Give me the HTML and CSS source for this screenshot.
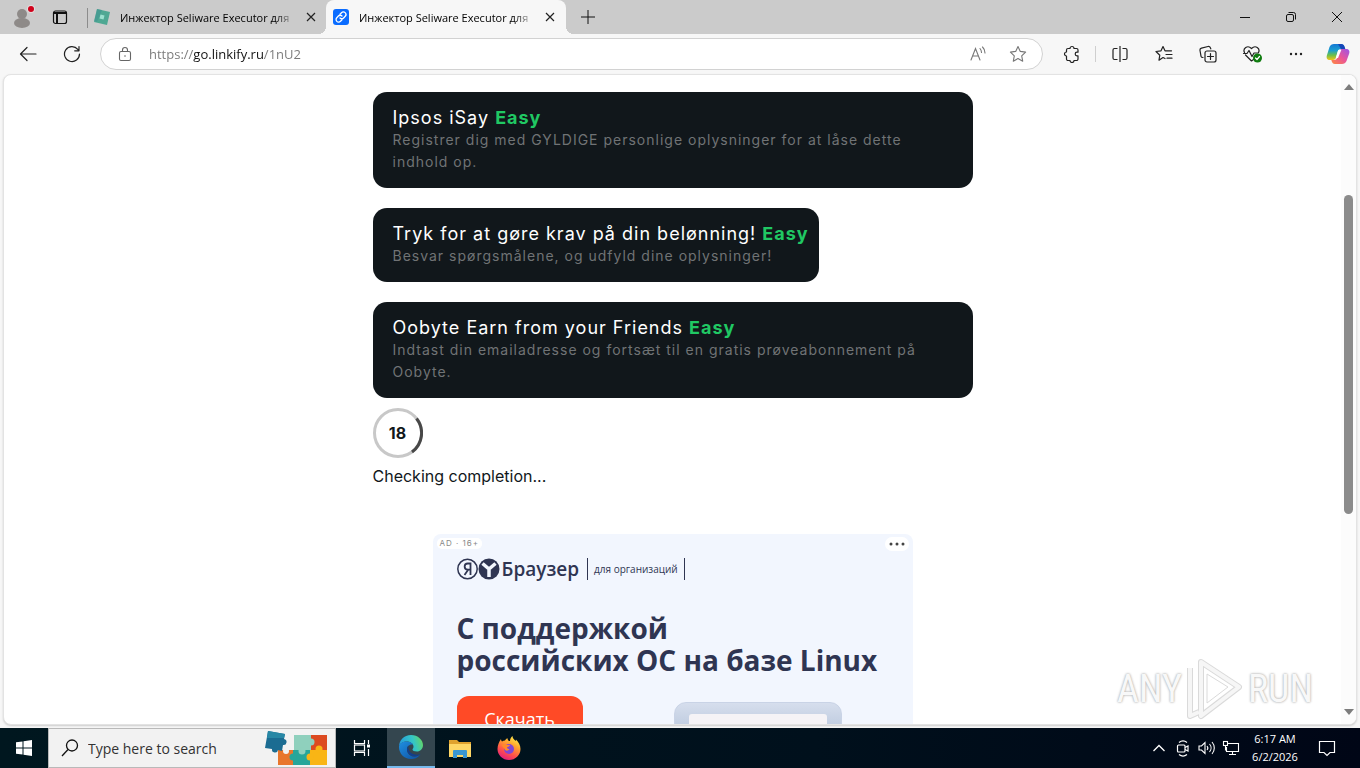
FILE: index.html
```html
<!DOCTYPE html>
<html lang="ru">

<head>
    <meta charset="UTF-8" />
    <meta name="viewport" content="width=device-width, initial-scale=1.0" />
    <title>Инжектор Seliware Executor для</title>
    <link rel="stylesheet" href="styles.css">
</head>

<body>
    <header class="tabbar">
        <button class="profile" aria-label="Profile">
            <svg width="28" height="28" viewBox="0 0 28 28">
                <circle cx="14" cy="11" r="5" fill="#8e8a88" />
                <ellipse cx="14" cy="20" rx="8" ry="5" fill="#8e8a88" />
                <circle cx="23" cy="6" r="4" fill="#e3dcdc" />
                <circle cx="23" cy="6" r="3" fill="#d0021b" />
            </svg>
        </button>
        <button class="tab-actions" aria-label="Tab actions">
            <svg width="16" height="16" viewBox="0 0 16 16" fill="none" stroke="#111" stroke-width="1.2">
                <rect x="1.5" y="2" width="13" height="12.500" rx="2" />
                <path d="M1.500 4h13M5 5v9" stroke-width="2" />
            </svg>
        </button>
        <div class="tab tab-first">
            <svg width="16" height="16" viewBox="0 0 16 16">
                <path d="M3 0l13 3-3 13-13-3z" fill="#4fa893" />
                <path d="M6.500 5.500l4 1-1 4-4-1z" fill="#9be0cf" />
                <path d="M3 0l5 1-5 12-3-1z" fill="#3f8f92" opacity=".5" />
            </svg>
            <span class="tab-title">Инжектор Seliware Executor для</span>
            <button class="tab-close" aria-label="Close tab">
                <svg width="10" height="10" viewBox="0 0 10 10" stroke="#222" stroke-width="1.2"><path d="M1 1l8 8M9 1l-8 8" /></svg>
            </button>
        </div>
        <div class="tab tab-active">
            <svg width="16" height="16" viewBox="0 0 16 16">
                <rect width="16" height="16" rx="3" fill="#0a6cff" />
                <g fill="none" stroke="#fff" stroke-width="1.300" stroke-linecap="round">
                    <path d="M7 5.200l1.500-1.500a2.500 2.500 0 0 1 3.700 3.600L10.600 9a2.500 2.500 0 0 1-3.600 0" />
                    <path d="M9 10.800l-1.500 1.500a2.500 2.500 0 0 1-3.700-3.600L5.400 7A2.500 2.500 0 0 1 9 7" />
                </g>
            </svg>
            <span class="tab-title">Инжектор Seliware Executor для</span>
            <button class="tab-close" aria-label="Close tab">
                <svg width="10" height="10" viewBox="0 0 10 10" stroke="#222" stroke-width="1.2"><path d="M1 1l8 8M9 1l-8 8" /></svg>
            </button>
        </div>
        <button class="new-tab" aria-label="New tab">
            <svg width="14" height="14" viewBox="0 0 14 14" stroke="#111"><path d="M7 0v14M0 7h14" /></svg>
        </button>
        <div class="window-buttons">
            <button aria-label="Minimize"><svg width="10" height="10" viewBox="0 0 10 10" stroke="#111"><path d="M0 5.500h10" /></svg></button>
            <button aria-label="Restore">
                <svg width="10" height="10" viewBox="0 0 10 10" fill="none" stroke="#111"><rect x=".5" y="2.500" width="7" height="7" rx="1.500" /><path d="M2.500 .5h5a2 2 0 0 1 2 2v5" /></svg>
            </button>
            <button aria-label="Close"><svg width="10" height="10" viewBox="0 0 10 10" stroke="#111"><path d="M0 0l10 10M10 0L0 10" /></svg></button>
        </div>
    </header>

    <div class="toolbar">
        <button aria-label="Back">
            <svg width="18" height="16" viewBox="0 0 18 16" fill="none" stroke="#222" stroke-width="1.200" stroke-linecap="round" stroke-linejoin="round"><path d="M17 8H1.500M8 1.500L1.500 8 8 14.500" /></svg>
        </button>
        <button aria-label="Refresh">
            <svg width="18" height="18" viewBox="0 0 18 18" fill="none" stroke="#222" stroke-width="1.200" stroke-linecap="round" stroke-linejoin="round"><path d="M16.500 9A7.500 7.500 0 1 1 14.800 4.300L16 5.800M16 1.500v4.300h-4.300" /></svg>
        </button>
        <form class="address">
            <button type="button" class="lock" aria-label="Site information">
                <svg width="14" height="16" viewBox="0 0 14 16" fill="none" stroke="#666" stroke-width="1.100"><rect x="1.500" y="5.500" width="11" height="9" rx="1.500" /><path d="M4.500 5.500V4a2.500 2.500 0 0 1 5 0v1.500" /><circle cx="7" cy="10" r=".8" fill="#666" stroke="none" /></svg>
            </button>
            <input class="url" type="text" value="https://go.linkify.ru/1nU2" aria-label="Address" spellcheck="false">
            <button type="button" aria-label="Read aloud">
                <svg width="18" height="18" viewBox="0 0 18 18" fill="none" stroke="#777" stroke-width="1.100" stroke-linecap="round"><path d="M2 15L6.500 3.500 11 15M3.500 11h6M11 3.500a6 6 0 0 1 1.500 4M13.500 2a8 8 0 0 1 2.500 6" /></svg>
            </button>
            <button type="button" aria-label="Add to favorites">
                <svg width="18" height="18" viewBox="0 0 18 18" fill="none" stroke="#777" stroke-width="1.100" stroke-linejoin="round"><path d="M9 1.500l2.300 4.900 5.300.7-3.900 3.700 1 5.400L9 13.600l-4.700 2.600 1-5.400L1.400 7.100l5.300-.7z" /></svg>
            </button>
        </form>
        <button aria-label="Extensions">
            <svg width="18" height="18" viewBox="0 0 18 18" fill="none" stroke="#222" stroke-width="1.200" stroke-linejoin="round"><path d="M5 3.500h2a2 2 0 0 1 4 0h2.500A1.500 1.500 0 0 1 15 5v2.200h-1a1.800 1.800 0 0 0 0 3.600h1V14a1.500 1.500 0 0 1-1.500 1.500H11a2 2 0 0 1-4 0H5A1.500 1.500 0 0 1 3.500 14v-3a2 2 0 0 1 0-4V5A1.500 1.500 0 0 1 5 3.500z" /></svg>
        </button>
        <span class="divider"></span>
        <button aria-label="Split screen">
            <svg width="18" height="18" viewBox="0 0 18 18" fill="none" stroke="#222" stroke-width="1.200"><path d="M6.500 3.500h-3A1.500 1.500 0 0 0 2 5v8a1.500 1.500 0 0 0 1.500 1.500h3M11.500 3.500h3A1.500 1.500 0 0 1 16 5v8a1.500 1.500 0 0 1-1.500 1.500h-3M9 1v16" /></svg>
        </button>
        <button aria-label="Favorites">
            <svg width="18" height="18" viewBox="0 0 18 18" fill="none" stroke="#222" stroke-width="1.200" stroke-linecap="round" stroke-linejoin="round"><path d="M10 13.500l-2-1-4 2.700.8-5L1 6.500l5-.7L8 1.500l2 4.300h6.500M11 9.500h6M12 13.200h5" /></svg>
        </button>
        <button aria-label="Collections">
            <svg width="18" height="18" viewBox="0 0 18 18" fill="none" stroke="#222" stroke-width="1.200" stroke-linecap="round"><rect x="6" y="6" width="11" height="11" rx="2" /><path d="M11.500 8.500v6M8.500 11.500h6M4 12.500a2 2 0 0 1-2-1.300L1 5.500a2 2 0 0 1 1.500-2.300L9 1.500A2 2 0 0 1 11.500 3l.3.900" /></svg>
        </button>
        <button aria-label="Browser essentials">
            <svg width="20" height="18" viewBox="0 0 20 18" fill="none" stroke="#222" stroke-width="1.200" stroke-linecap="round" stroke-linejoin="round">
                <path d="M2.500 7.500C.5 3.500 5.500-.5 9.500 3.500c4-4 9 0 7 4M3.500 10l6 6 2-1.500M1.500 8.500H5l2-3 3 6 2-3.500h4" />
                <circle cx="15.500" cy="13" r="4.500" fill="#107c10" stroke="none" />
                <path d="M13.500 13l1.500 1.500 2.500-3" stroke="#fff" />
            </svg>
        </button>
        <button aria-label="Settings and more">
            <svg width="14" height="4" viewBox="0 0 14 4" fill="#222"><circle cx="2" cy="2" r="1.200" /><circle cx="7" cy="2" r="1.200" /><circle cx="12" cy="2" r="1.200" /></svg>
        </button>
        <button class="copilot" aria-label="Copilot">
            <svg width="24" height="24" viewBox="0 0 24 24">
                <defs>
                    <linearGradient id="cp-a" x1="0" y1="0" x2="0" y2="1"><stop offset="0" stop-color="#1477d4" /><stop offset=".4" stop-color="#1b9fd0" /><stop offset=".7" stop-color="#6cc04a" /><stop offset="1" stop-color="#f5c518" /></linearGradient>
                    <linearGradient id="cp-b" x1="1" y1="0" x2="0" y2="1"><stop offset="0" stop-color="#9a54e8" /><stop offset=".5" stop-color="#ea5599" /><stop offset="1" stop-color="#ff8a3d" /></linearGradient>
                </defs>
                <path d="M8 2h7a3 3 0 0 1 3 2l1 3h-4c-2 0-3 1-3.500 3L10 15.500C9.500 17 8.500 18 7 18H4c-3 0-4-2-3-5l2.500-8C4.300 3 6 2 8 2z" fill="url(#cp-a)" />
                <path d="M16 22H9a3 3 0 0 1-3-2l-.7-2H8c2 0 3-1 3.500-3L13.500 9c.5-1.500 1.500-2 3-2H20c3 0 4 2 3 5l-2.500 7c-.8 2-2.500 3-4.500 3z" fill="url(#cp-b)" />
                <path d="M15 2c2 0 3 1 3.500 2.500l.8 2.500H15l-3-5z" fill="#1547b8" />
                <path d="M12.300 8h3L12 16H9.800z" fill="#fff" />
            </svg>
        </button>
    </div>

    <div class="viewport">
        <main class="page">
            <div class="offers">
                <a href="#" class="offer">
                    <span class="offer-title">Ipsos iSay <b>Easy</b></span>
                    <span class="offer-text">Registrer dig med GYLDIGE personlige oplysninger for at låse dette indhold op.</span>
                </a>
                <a href="#" class="offer">
                    <span class="offer-title">Tryk for at gøre krav på din belønning! <b>Easy</b></span>
                    <span class="offer-text">Besvar spørgsmålene, og udfyld dine oplysninger!</span>
                </a>
                <a href="#" class="offer">
                    <span class="offer-title">Oobyte Earn from your Friends <b>Easy</b></span>
                    <span class="offer-text">Indtast din emailadresse og fortsæt til en gratis prøveabonnement på Oobyte.</span>
                </a>
                <div class="timer">
                    <svg viewBox="0 0 50 50" fill="none" stroke-width="3">
                        <circle cx="25" cy="25" r="23.500" stroke="#c8c8c8" />
                        <path d="M43.500 10.500A23.500 23.500 0 0 1 39 44" stroke="#484848" />
                    </svg>
                    <span>18</span>
                </div>
                <p class="checking">Checking completion...</p>
            </div>

            <section class="ad">
                <span class="ad-label">AD · 16+</span>
                <button class="ad-menu" aria-label="Ad options">
                    <svg width="16" height="4" viewBox="0 0 16 4" fill="#444"><circle cx="2" cy="2" r="1.500" /><circle cx="8" cy="2" r="1.500" /><circle cx="14" cy="2" r="1.500" /></svg>
                </button>
                <div class="ad-logo">
                    <svg width="43" height="22" viewBox="0 0 43 22">
                        <circle cx="10.500" cy="11" r="9.700" fill="none" stroke="#2f3552" stroke-width="1.500" />
                        <path d="M13.500 17V5.500h-2.700c-4.200 0-4.200 6.200 0 6.200h2.700M11 12l-3.500 5" fill="none" stroke="#2f3552" stroke-width="1.800" />
                        <circle cx="32" cy="11" r="10.500" fill="#2f3552" />
                        <path d="M25.500 5.500l6.500 5.500 6.500-5.500M32 10.500V19" fill="none" stroke="#f3f7fe" stroke-width="3.500" />
                    </svg>
                    <span class="ad-brand">Браузер</span>
                    <span class="ad-tag">для организаций</span>
                </div>
                <h2>С поддержкой<br>российских ОС на базе Linux</h2>
                <div class="ad-row">
                    <a href="#" class="ad-button">Скачать</a>
                    <div class="ad-device"><div class="ad-screen"></div></div>
                </div>
            </section>
        </main>
        <div class="scrollbar">
            <svg width="10" height="6" viewBox="0 0 10 6" fill="#7d7d7d"><path d="M5 0l5 6H0z" /></svg>
            <div class="track"><div class="thumb"></div></div>
            <svg width="10" height="6" viewBox="0 0 10 6" fill="#7d7d7d"><path d="M0 0h10L5 6z" /></svg>
        </div>
        <div class="watermark">
            <span>ANY</span>
            <svg width="58" height="64" viewBox="0 0 58 64" fill="none" stroke-linejoin="round">
                <g stroke="#dadada" stroke-width="6"><path d="M15 5l38 25-38 29z" /><path d="M4 11v48l9-4" /></g>
                <g stroke="#f6f6f6" stroke-width="4"><path d="M15 5l38 25-38 29z" /><path d="M4 11v48l9-4" /></g>
                <path d="M21 17v29l21-16z" stroke="#dadada" />
            </svg>
            <span>RUN</span>
        </div>
    </div>

    <footer class="taskbar">
        <button class="start" aria-label="Start">
            <svg width="16" height="16" viewBox="0 0 16 16" fill="#fff"><path d="M0 2.300l6.500-.9v6.100H0zM7.500 1.200L16 0v7.500H7.500zM0 8.500h6.500v6.100L0 13.700zM7.500 8.500H16V16l-8.500-1.200z" /></svg>
        </button>
        <label class="search">
            <svg width="18" height="18" viewBox="0 0 18 18" fill="none" stroke="#111" stroke-width="1.300"><circle cx="11" cy="6.500" r="5.500" /><path d="M7 10.500L1 17" /></svg>
            <input type="search" placeholder="Type here to search" aria-label="Type here to search">
            <svg width="64" height="36" viewBox="0 0 64 36">
                <path d="M13 20h15v15H13z" fill="#e8762c" />
                <path d="M28 20h17v15H28z" fill="#26a69a" />
                <path d="M45 20h17v15H45z" fill="#f9b515" />
                <path d="M29 5h17v15H29z" fill="#8fd0bd" />
                <path d="M46 5h16v15H46z" fill="#dc4a20" />
                <circle cx="28" cy="27" r="3.500" fill="#26a69a" />
                <circle cx="45" cy="27" r="3.500" fill="#f9b515" />
                <circle cx="46" cy="12" r="3.500" fill="#8fd0bd" />
                <circle cx="37" cy="21" r="3.500" fill="#8fd0bd" />
                <circle cx="54" cy="19" r="3.500" fill="#f9b515" />
                <circle cx="21" cy="21" r="3" fill="#f2f2f2" />
                <path d="M3 1l17 3-1 5a3 3 0 1 1-1 6l-1 6-4-1a3 3 0 1 1-6-1L0 18z" fill="#1b6c92" />
                <path d="M3 1l17 3-1 4L2 8z" fill="#2787a5" />
            </svg>
        </label>
        <button class="task" aria-label="Task View">
            <svg width="18" height="16" viewBox="0 0 18 16" fill="none" stroke="#fff" stroke-width="1.200"><path d="M1.500 0v3.500h10V0M1.500 16v-3.500h10V16M15.500 0v4M15.500 9v7" /><rect x="1.500" y="5" width="10" height="6" /><path d="M14 4.500h3v3h-3z" fill="#fff" stroke="none" /></svg>
        </button>
        <button class="task task-active" aria-label="Edge">
            <svg width="24" height="24" viewBox="0 0 24 24">
                <defs>
                    <linearGradient id="edge-a" x1="0" y1=".5" x2="1" y2=".3"><stop offset="0" stop-color="#2499dc" /><stop offset=".6" stop-color="#35c6c5" /><stop offset="1" stop-color="#65d662" /></linearGradient>
                    <linearGradient id="edge-b" x1="0" y1="0" x2="1" y2="1"><stop offset="0" stop-color="#1f8fe0" /><stop offset="1" stop-color="#0d4fa0" /></linearGradient>
                </defs>
                <path d="M0 12C0 5 5 0 12 0c7 0 12 5 12 10 0 4-3 6.500-6 6.500-3 0-4.500-1-4.500-2 0-.7 1-1 1-3C14.500 8.500 11 6.500 7.500 6.500 3.500 6.500 0 9 0 12z" fill="url(#edge-a)" />
                <path d="M0 12c0-3.500 4-5.500 7.500-5.500 3 0 5.500 1.200 6.500 3-4-.5-6 2-6 5 0 4 3.500 7.500 8 7 2-.2 4-1.200 5.500-2.500C19 23 16 24 12 24 5 24 0 18.500 0 12z" fill="url(#edge-b)" />
                <path d="M9.500 10.500C7 13 7.500 19 13 21c3 1 6.500 0 8.500-2-3 1.500-8 .8-10.300-2C9.500 15 9 12.500 9.500 10.500z" fill="#123f8c" />
            </svg>
        </button>
        <button class="task" aria-label="File Explorer">
            <svg width="22" height="19" viewBox="0 0 22 19"><path d="M0 1h8l2 2h12v5H0z" fill="#e0a22e" /><path d="M0 5h22v13H0z" fill="#ffd766" /><path d="M4 19v-7a1 1 0 0 1 1-1h12a1 1 0 0 1 1 1v7h-4v-3H8v3z" fill="#3b97d3" /></svg>
        </button>
        <button class="task" aria-label="Firefox">
            <svg width="24" height="24" viewBox="0 0 24 24">
                <defs><linearGradient id="ff" x1=".8" y1="0" x2=".3" y2="1"><stop offset="0" stop-color="#fff44f" /><stop offset=".35" stop-color="#ffa52e" /><stop offset=".7" stop-color="#ff4f4b" /><stop offset="1" stop-color="#e01c80" /></linearGradient></defs>
                <path d="M4 3c0 1 .5 2 1 2.500 1-.7 2-1 3-1 .5-1 1.500-2 2.500-2.300 0 1 .5 2 1.500 2.800h1C13 3 14 1 15.500 0c0 2 1.500 3.500 3 5 .4-.4.5-1 .4-1.600C21.500 6 23.500 9 23.500 13c0 6-5 11-11.500 11S.5 19 .5 13C.5 9 2 6 4 3z" fill="url(#ff)" />
                <circle cx="12" cy="13" r="5" fill="#8046d4" />
                <path d="M4.500 9c2-1 4-1 5.500 0h3c-.5 1.500-2 2-3 2 0 1.500 1 2 2.500 2-1 2-4 2.500-5 0z" fill="#ff8a2a" />
            </svg>
        </button>
        <div class="tray">
            <button aria-label="Hidden icons"><svg width="12" height="8" viewBox="0 0 12 8" fill="none" stroke="#fff" stroke-width="1.300"><path d="M.5 7L6 1.500 11.500 7" /></svg></button>
            <button aria-label="Meet now"><svg width="14" height="18" viewBox="0 0 14 18" fill="none" stroke="#fff" stroke-width="1.200"><rect x="1.500" y="6" width="7.500" height="7" rx="1" /><path d="M9 8.500l3-1.500v5l-3-1.500M3 3.500c2.500-2 5.500-2 8 0M3 15.500c2.500 2 5.500 2 8 0" /></svg></button>
            <button aria-label="Volume"><svg width="18" height="14" viewBox="0 0 18 14" fill="none" stroke="#fff" stroke-width="1.100"><path d="M1 5h2.500L7 1.500v11L3.500 9H1zM9 5a3 3 0 0 1 0 4M11.500 3a6 6 0 0 1 0 8M14 1a9 9 0 0 1 0 12" /></svg></button>
            <button aria-label="Network"><svg width="18" height="16" viewBox="0 0 18 16" fill="none" stroke="#fff" stroke-width="1.100"><path d="M6 3.500h10.500v8H4.500V7M7 14.500h7M10.500 11.500v3" /><rect x="1.500" y="1.500" width="4" height="4" /><path d="M3.500 5.500v4.500H5" /></svg></button>
            <time class="clock">6:17 AM<br>6/2/2026</time>
            <button class="notes" aria-label="Notifications"><svg width="18" height="18" viewBox="0 0 18 18" fill="none" stroke="#fff" stroke-width="1.200"><path d="M1.500 2.500h15v11H12L9 16.500l-3-3H1.500z" /></svg></button>
        </div>
    </footer>
</body>

</html>
```
FILE: styles.css
```css
:root{
    --frame: #f7f7f7;
    --card: #11171b;
    --green: #20c863;
    --navy: #2f3552;
}

*{
    box-sizing: border-box;
}
body{
    margin: 0;
    height: 100vh;
    display: flex;
    flex-direction: column;
    overflow: hidden;
    background-color: var(--frame);
    font-family: "Open Sans", "Noto Sans", sans-serif;
}
button{
    display: flex;
    justify-content: center;
    align-items: center;
    padding: 0;
    border: 0;
    background: none;
}
svg{
    flex-shrink: 0;
}
input{
    border: 0;
    outline: 0;
    padding: 0;
    background: none;
    font-family: inherit;
}

/* tabs */
.tabbar{
    display: flex;
    height: 34px;
    background-color: #cbcbcb;
}
.profile{
    width: 44px;
}
.tab-actions{
    width: 32px;
    margin-right: 10px;
}
.tab{
    display: flex;
    align-items: center;
    width: 240px;
    padding: 0 4px 0 7px;
    position: relative;
}
.tab-first{
    padding: 0 3px 0 8px;
}
.tab-first::before{
    content: "";
    position: absolute;
    left: 1px;
    top: 8px;
    width: 1px;
    height: 20px;
    background-color: #8c8c8c;
}
.tab-active{
    background-color: var(--frame);
    border-radius: 8px 8px 0 0;
}
.tab-active::before,
.tab-active::after{
    content: "";
    position: absolute;
    bottom: 0;
    width: 8px;
    height: 8px;
}
.tab-active::before{
    left: -8px;
    background: radial-gradient(circle at 0 0, transparent 8px, var(--frame) 8px);
}
.tab-active::after{
    right: -8px;
    background: radial-gradient(circle at 100% 0, transparent 8px, var(--frame) 8px);
}
.tab-title{
    flex: 1;
    margin: 0 3px 0 10px;
    overflow: hidden;
    white-space: nowrap;
    font-size: 11px;
    color: #000;
    mask-image: linear-gradient(90deg, #000 88%, transparent);
}
.tab-close{
    width: 24px;
    height: 24px;
}
.new-tab{
    width: 44px;
}
.window-buttons{
    display: flex;
    margin-left: auto;
}
.window-buttons button{
    width: 46px;
}

/* address bar */
.toolbar{
    display: flex;
    align-items: center;
    height: 40px;
    padding: 0 2px 0 6px;
}
.toolbar button{
    width: 44px;
    height: 32px;
}
.toolbar .divider{
    width: 1px;
    height: 16px;
    margin: 0 2px 0 1px;
    background-color: #cfcfcf;
}
.toolbar .copilot{
    width: 40px;
}
.address{
    display: flex;
    align-items: center;
    flex: 1;
    height: 32px;
    margin: 0 7px 0 6px;
    padding: 0 4px;
    background-color: #fff;
    border: 1px solid #d2d2d2;
    border-radius: 16px;
}
.toolbar .address button{
    width: 40px;
}
.url{
    flex: 1;
    min-width: 0;
    margin-left: 4px;
    font-size: 13px;
    color: transparent;
    background: linear-gradient(90deg, #777 44px, #111 44px 115px, #777 115px);
    background-clip: text;
    -webkit-background-clip: text;
}

/* page */
.viewport{
    flex: 1;
    min-height: 0;
    display: flex;
    position: relative;
    margin: 0 3px 3px;
    background-color: #fff;
    border: 1px solid #e3e3e3;
    border-radius: 8px;
    overflow: hidden;
    box-shadow: 0 1px 2px #ccc;
}
.page{
    flex: 1;
    overflow: hidden;
    padding-top: 17px;
    font-family: Inter, sans-serif;
    color: #11171b;
}
.offers{
    max-width: 600px;
    margin: 0 auto;
}
.offer{
    display: block;
    width: fit-content;
    margin-bottom: 20px;
    padding: 15px 10px 15px 20px;
    background-color: var(--card);
    border-radius: 14px;
    letter-spacing: 1px;
    line-height: 22px;
    text-decoration: none;
}
.offer-title,
.offer-text{
    display: block;
}
.offer-title{
    font-size: 18px;
    color: #fff;
}
.offer-title b{
    color: var(--green);
}
.offer-text{
    padding-right: 10px;
    font-size: 14px;
    color: #707375;
}
.timer{
    display: grid;
    place-items: center;
    width: 50px;
    height: 50px;
    margin-top: -10px;
    font-size: 16px;
    font-weight: 700;
}
.timer svg,
.timer span{
    grid-area: 1 / 1;
}
.checking{
    margin: 6px 0 46px;
    font-size: 16px;
    line-height: 24px;
}

/* ad */
.ad{
    position: relative;
    max-width: 480px;
    margin: 0 auto;
    padding: 24px;
    background-color: #f2f6fe;
    border-radius: 8px;
    font-family: "Open Sans", sans-serif;
    color: var(--navy);
}
.ad-label{
    position: absolute;
    top: 4px;
    left: 4px;
    padding: 0 3px;
    background-color: #fff;
    border-radius: 5px;
    font: 8px/11px Inter, sans-serif;
    letter-spacing: 1px;
    color: #888;
}
.ad-menu{
    position: absolute;
    top: 3px;
    right: 4px;
    width: 24px;
    height: 14px;
    background-color: #fff;
    border-radius: 7px;
}
.ad-logo{
    display: flex;
    align-items: center;
    height: 22px;
}
.ad-brand{
    margin: 0 8px 0 2px;
    font-size: 19px;
    font-weight: 600;
}
.ad-tag{
    padding: 0 6px;
    border: solid var(--navy);
    border-width: 0 1px;
    font-size: 10px;
    font-weight: 500;
    line-height: 22px;
}
.ad h2{
    margin: 32px 0 20px;
    font-size: 28px;
    font-weight: 700;
    line-height: 32px;
    white-space: nowrap;
}
.ad-row{
    display: flex;
    gap: 91px;
}
.ad-button{
    width: 126px;
    height: 48px;
    background-color: #ff4a26;
    border-radius: 12px;
    font-size: 18px;
    line-height: 46px;
    text-align: center;
    text-decoration: none;
    color: #fff;
}
.ad-device{
    width: 168px;
    height: 110px;
    margin-top: 6px;
    padding: 11px 14px;
    background: linear-gradient(#d6deed, #c3cfe2 20px);
    border: 1px solid #c9d3e6;
    border-radius: 12px 12px 0 0;
}
.ad-screen{
    height: 100%;
    background-color: #f5f3f6;
    border-radius: 3px;
}

.scrollbar{
    display: flex;
    flex-direction: column;
    align-items: center;
    gap: 5px;
    width: 15px;
    padding: 9px 0;
    background-color: #fcfcfc;
}
.track{
    flex: 1;
    width: 9px;
    display: grid;
    grid-template-rows: 100fr 321fr 191fr;
}
.thumb{
    grid-row: 2;
    background-color: #8b8b8b;
    border-radius: 5px;
}

.watermark{
    position: absolute;
    right: 43px;
    bottom: 3px;
    display: flex;
    align-items: center;
    gap: 4px;
    font: 38px "Liberation Sans Narrow", "Roboto Condensed", "Liberation Sans", sans-serif;
    color: #f8f8f8;
    text-shadow: 0 0 2px #aaa, 0 0 3px #ccc;
}

/* taskbar */
.taskbar{
    display: flex;
    height: 40px;
    background: linear-gradient(90deg, #00171f, #00101c 60%, #000616);
    color: #fff;
}
.start{
    width: 48px;
}
.search{
    display: flex;
    align-items: center;
    width: 288px;
    margin-right: 2px;
    padding: 0 6px 0 12px;
    background-color: #f2f2f2;
    border: 1px solid #b9b9b9;
}
.search input{
    flex: 1;
    min-width: 0;
    margin-left: 9px;
    font-size: 14px;
}
.search input::placeholder{
    color: #333;
}
.task{
    width: 48px;
    margin-right: 1px;
}
.task-active{
    background-color: #34464f;
    border-bottom: 2px solid #76b9ed;
}
.tray{
    display: flex;
    align-items: center;
    margin-left: auto;
    padding-right: 9px;
}
.tray button{
    width: 24px;
    height: 40px;
}
.clock{
    width: 56px;
    margin-left: 4px;
    font-size: 11px;
    line-height: 18px;
    text-align: center;
}
.tray .notes{
    width: 48px;
}
```
